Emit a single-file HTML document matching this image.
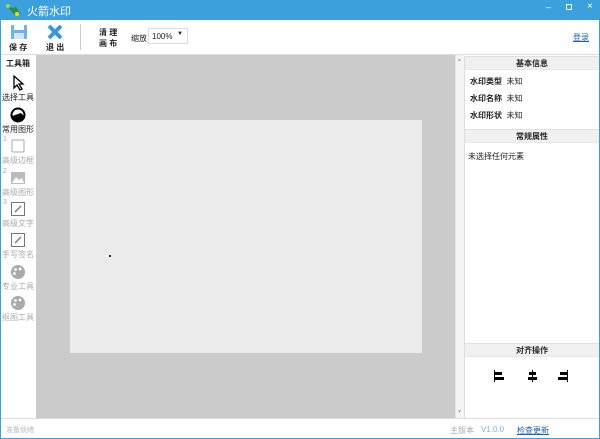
<!DOCTYPE html>
<html><head><meta charset="utf-8"><style>
*{margin:0;padding:0;box-sizing:border-box}
body{width:600px;height:439px;overflow:hidden;font-family:"Liberation Sans","Noto Sans CJK SC",sans-serif;font-size:8px;color:#222;background:#fff;position:relative}
.a{position:absolute}
.win{border:1px solid #3ba0dc;width:600px;height:439px;position:absolute;left:0;top:0;pointer-events:none}
.gray{color:#aaa}
.hdr{background:#f0f0f0;text-align:center;font-weight:bold;height:14px;line-height:14px;border-top:1px solid #e0e0e0;border-bottom:1px solid #e8e8e8}
.it{position:absolute;left:0;width:36px;text-align:center;white-space:nowrap}
.it svg{display:block;margin:0 auto 1px}
</style></head><body>
<div class="a" style="left:0;top:0;width:600px;height:20px;background:#3ba0dc"></div>
<svg class="a" style="left:4px;top:2px" width="18" height="16"><path d="M2 3 L8 6 L12 5 L16 11 L12 14 L8 10 Z" fill="#2f8c3a"/><circle cx="4" cy="4" r="2" fill="#9fd16a"/><circle cx="13" cy="12" r="2" fill="#f2d53c"/></svg>
<div class="a" style="left:27px;top:3px;color:#fff;font-size:11px">火箭水印</div>
<div class="a" style="left:546px;top:2px;color:#fff;font-size:9px">–</div>
<div class="a" style="left:566px;top:4px;width:6px;height:6px;border:1px solid #fff"></div>
<div class="a" style="left:587px;top:1px;color:#fff;font-size:10px">×</div>
<svg class="a" style="left:10px;top:24px" width="18" height="16"><rect x="1" y="1" width="16" height="14" rx="1" fill="#6fb3e6"/><rect x="4" y="1" width="10" height="5" fill="#fff"/><rect x="4" y="9" width="10" height="6" fill="#cfe6f8"/></svg>
<div class="a" style="left:9px;top:42px;font-weight:bold">保 存</div>
<svg class="a" style="left:47px;top:24px" width="16" height="16"><path d="M2 2 L14 14 M14 2 L2 14" stroke="#3a97d8" stroke-width="4"/></svg>
<div class="a" style="left:46px;top:42px;font-weight:bold">退 出</div>
<div class="a" style="left:80px;top:24px;width:1px;height:26px;background:#ccc"></div>
<div class="a" style="left:99px;top:27px;font-weight:bold;line-height:11px">清 理<br>画 布</div>
<div class="a" style="left:131px;top:33px">缩放</div>
<div class="a" style="left:148px;top:28px;width:40px;height:16px;border:1px solid #ddd;padding:3px 3px;font-size:8px">100%<span style="position:absolute;right:4px;top:2px;font-size:6px">▼</span></div>
<div class="a" style="left:573px;top:32px;color:#1a5fb4;text-decoration:underline">登录</div>
<div class="a" style="left:0;top:54px;width:600px;height:1px;background:#ddd"></div>
<!-- left toolbox -->
<div class="a" style="left:0;top:55px;width:36px;height:363px;background:#fff"></div>
<div class="it" style="top:58px;font-weight:bold">工具箱</div>
<div class="it" style="top:75px"><svg width="14" height="16"><path d="M3 1 L3 13 L6 10 L9 15 L11 14 L8 9 L12 9 Z" fill="#fff" stroke="#000" stroke-width="1.3"/></svg>选择工具</div>
<div class="it" style="top:107px"><svg width="16" height="16"><circle cx="8" cy="8" r="6.5" fill="none" stroke="#000" stroke-width="2"/><path d="M2 9 A6 6 0 0 0 14 9 L11 6 Z" fill="#000"/></svg>常用图形</div>
<div class="it gray" style="top:138px"><svg width="16" height="16"><rect x="2" y="2" width="12" height="12" rx="1" fill="none" stroke="#aaa"/></svg>高级边框</div>
<div class="it gray" style="top:170px"><svg width="16" height="16"><rect x="1" y="2" width="14" height="12" fill="#bbb"/><path d="M2 13 L6 7 L9 10 L12 8 L14 13Z" fill="#fff"/></svg>高级图形</div>
<div class="it gray" style="top:201px"><svg width="16" height="16"><rect x="1.5" y="1.5" width="13" height="13" fill="none" stroke="#777"/><path d="M5 11 L11 5" stroke="#777" stroke-width="1.3"/></svg>高级文字</div>
<div class="it gray" style="top:232px"><svg width="16" height="16"><rect x="1.5" y="1.5" width="13" height="13" fill="none" stroke="#777"/><path d="M5 11 L11 5" stroke="#777" stroke-width="1.3"/></svg>手写签名</div>
<div class="it gray" style="top:264px"><svg width="16" height="16"><circle cx="8" cy="8" r="7" fill="#aaa"/><circle cx="5.5" cy="5.5" r="1.4" fill="#fff"/><circle cx="10" cy="5" r="1.4" fill="#fff"/><circle cx="4.5" cy="9.5" r="1.4" fill="#fff"/></svg>专业工具</div>
<div class="it gray" style="top:295px"><svg width="16" height="16"><circle cx="8" cy="8" r="7" fill="#aaa"/><circle cx="5.5" cy="5.5" r="1.4" fill="#fff"/><circle cx="10" cy="5" r="1.4" fill="#fff"/><circle cx="4.5" cy="9.5" r="1.4" fill="#fff"/></svg>抠图工具</div>
<div class="a gray" style="left:3px;top:136px;font-size:7px">1</div>
<div class="a gray" style="left:3px;top:168px;font-size:7px">2</div>
<div class="a gray" style="left:3px;top:199px;font-size:7px">3</div>
<!-- canvas -->
<div class="a" style="left:36px;top:55px;width:419px;height:363px;background:#cbcbcb"></div>
<div class="a" style="left:70px;top:120px;width:352px;height:233px;background:#ebebeb"></div>
<div class="a" style="left:109px;top:255px;width:2px;height:2px;background:#333"></div>
<div class="a" style="left:455px;top:55px;width:9px;height:363px;background:#f4f4f4;border-left:1px solid #e6e6e6"></div>
<div class="a" style="left:457px;top:57px;font-size:5px;color:#aaa">▲</div>
<div class="a" style="left:457px;top:409px;font-size:5px;color:#aaa">▼</div>
<!-- right panel -->
<div class="a" style="left:464px;top:56px;width:135px;height:362px;border-left:1px solid #ddd">
<div class="hdr">基本信息</div>
<div style="padding:3px 0 0 5px;line-height:17px"><b>水印类型</b>&nbsp; 未知<br><b>水印名称</b>&nbsp; 未知<br><b>水印形状</b>&nbsp; 未知</div>
<div class="hdr" style="position:absolute;top:73px;width:134px">常规属性</div>
<div style="position:absolute;top:95px;left:3px">未选择任何元素</div>
<div class="hdr" style="position:absolute;top:287px;width:134px">对齐操作</div>
<svg style="position:absolute;top:313px;left:28px" width="80" height="14"><rect x="1" y="1" width="1" height="12" fill="#000"/><rect x="2" y="3" width="7" height="3" fill="#000"/><rect x="2" y="8" width="9" height="3" fill="#000"/><rect x="39" y="1" width="1" height="12" fill="#000"/><rect x="36" y="3" width="7" height="3" fill="#000"/><rect x="35" y="8" width="9" height="3" fill="#000"/><rect x="74" y="1" width="1" height="12" fill="#000"/><rect x="67" y="3" width="7" height="3" fill="#000"/><rect x="65" y="8" width="9" height="3" fill="#000"/></svg>
</div>
<div class="a" style="left:0;top:418px;width:600px;height:21px;background:#fff;border-top:1px solid #ddd"></div>
<div class="a" style="left:6px;top:425px;color:#bbb;font-size:7px">准备就绪</div>
<div class="a" style="left:450px;top:425px;color:#aaa">主版本</div>
<div class="a" style="left:481px;top:425px;color:#7fb3de">V1.0.0</div>
<div class="a" style="left:517px;top:425px;color:#1a5fb4;text-decoration:underline">检查更新</div>
<div class="win"></div>
</body></html>
